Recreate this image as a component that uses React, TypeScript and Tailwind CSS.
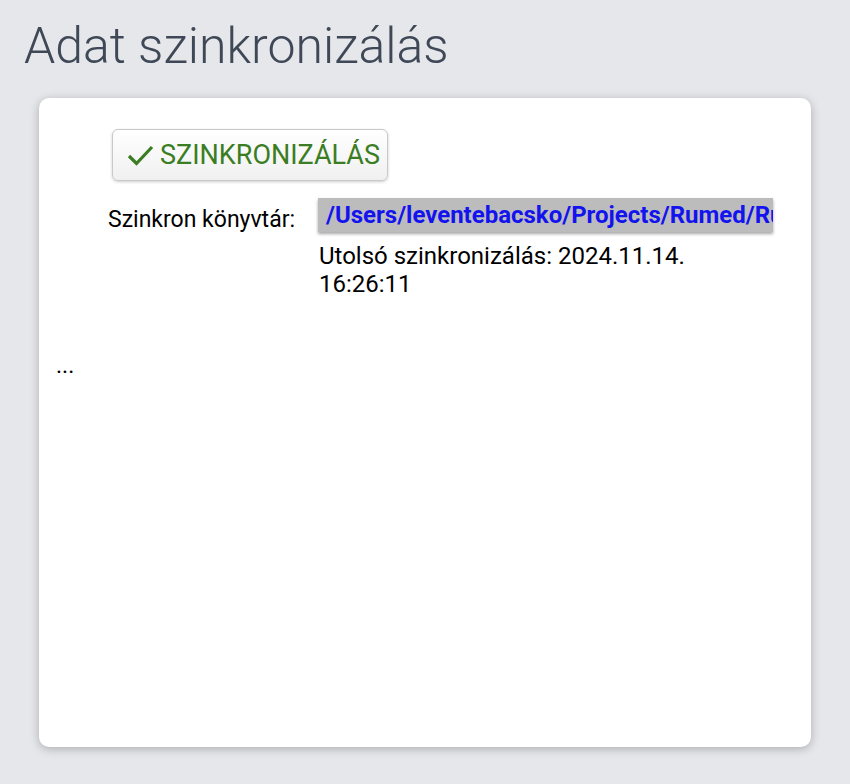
const App = () => {
  return (
    <div className="w-[850px] h-[784px] bg-[#e6e7eb] font-['Roboto',sans-serif] overflow-hidden">
      <h1 className="pl-[24px] pt-[14px] text-[50px] leading-[64px] font-light text-[#3f4857]">
        Adat szinkronizálás
      </h1>

      <div className="mx-[39px] mt-[20px] h-[649px] bg-white rounded-[10px] shadow-[0_2px_10px_rgba(0,0,0,0.25)] pt-[31px] pl-[17px]">
        <div className="pl-[56px]">
          <button className="h-[52px] w-[276px] flex items-center gap-[6px] pl-[14px] rounded-[6px] border border-[#c9c9c9] bg-gradient-to-b from-white to-[#f0f0f0] shadow-[0_1px_3px_rgba(0,0,0,0.2)] text-[#3b7d23] text-[27px] leading-[30px] whitespace-nowrap">
            <svg width="27" height="22" viewBox="0 0 27 22" fill="none" className="shrink-0">
              <path d="M2 12 L9.5 19.5 L25 3" stroke="#3b7d23" strokeWidth="3.2" />
            </svg>
            <span>SZINKRONIZÁLÁS</span>
          </button>
        </div>

        <div className="flex mt-[17px] pl-[52px] text-black">
          <div className="w-[210px] pt-[10px] text-[23px] leading-[24px] whitespace-nowrap">Szinkron könyvtár:</div>
          <div className="w-[455px]">
            <div className="h-[34px] bg-[#bcbcbc] shadow-[0_2px_3px_rgba(0,0,0,0.35)] overflow-hidden whitespace-nowrap pl-[8px] text-[24px] leading-[34px] font-bold text-[#1313ee]">
              /Users/leventebacsko/Projects/Rumed/RumedSync
            </div>
            <div className="mt-[10px] text-[24px] leading-[28px] pl-[1px]">
              Utolsó szinkronizálás: 2024.11.14. 16:26:11
            </div>
          </div>
        </div>

        <div className="mt-[56px] text-[23px] leading-[24px] text-black">...</div>
      </div>
    </div>
  );
};

export default App;
